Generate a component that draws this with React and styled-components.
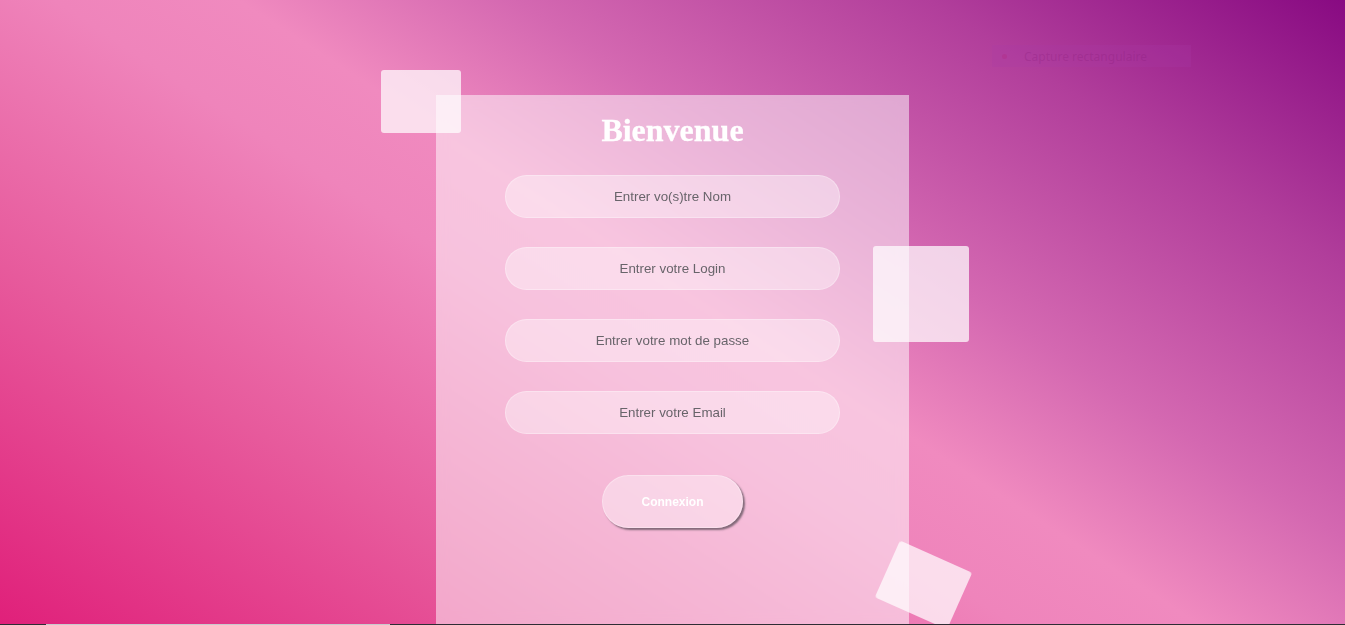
import styled, { createGlobalStyle } from "styled-components";

const GlobalStyle = createGlobalStyle`
    * { box-sizing: border-box; }
    html, body { margin: 0; padding: 0; height: 100%; overflow: hidden; }
    body { font-family: "Liberation Sans", Arial, sans-serif; }
`

const Page = styled.div`
    width: 100%;
    height: 625px;
    display: flex;
    flex-direction: column;
`
const Stage = styled.div`
    position: relative;
    flex: 1;
    overflow: hidden;
    display: flex;
    justify-content: center;
    padding-top: 95px;
    background: linear-gradient(33deg, #e0207a 0%, #e75a9c 24%, #ef84bb 44%, #f08abf 52%, #d468b1 64%, #b13e9b 82%, #880a82 100%);
`
const Card = styled.div`
    position: relative;
    z-index: 1;
    width: 473px;
    height: 100%;
    padding-top: 17px;
    display: flex;
    flex-direction: column;
    align-items: center;
    background-color: rgba(255, 255, 255, 0.5);
    backdrop-filter: blur(6px);
`
const Title = styled.h1`
    margin: 0 0 26px 0;
    font-family: "Liberation Serif", "Times New Roman", serif;
    font-size: 32px;
    font-weight: 700;
    color: #fff;
    -webkit-text-stroke: 0.3px #fff;
`
const Form = styled.form`
    display: flex;
    flex-direction: column;
    align-items: center;
    gap: 29px;
`
const Field = styled.input`
    width: 335px;
    height: 43px;
    border-radius: 22px;
    border: 1px solid rgba(255, 255, 255, 0.3);
    background-color: rgba(255, 255, 255, 0.38);
    outline: none;
    text-align: center;
    font-family: "Liberation Sans", Arial, sans-serif;
    font-size: 13.333px;
    color: #68646a;
    &::placeholder {
        color: #68646a;
    }
`
const Button = styled.button`
    margin-top: 12px;
    width: 141px;
    height: 53px;
    border-radius: 27px;
    border: 1px solid rgba(255, 255, 255, 0.3);
    background-color: rgba(255, 255, 255, 0.38);
    box-shadow: 2px 2px 2px rgba(80, 70, 80, 0.7);
    color: #fff;
    font-family: "Liberation Sans", Arial, sans-serif;
    font-size: 12px;
    font-weight: bold;
    cursor: pointer;
`
const Square = styled.div`
    position: absolute;
    z-index: 2;
    left: ${({ x }) => x}px;
    top: ${({ y }) => y}px;
    width: ${({ w }) => w}px;
    height: ${({ h }) => h}px;
    border-radius: 3px;
    background-color: rgba(255, 255, 255, 0.72);
    transform: rotate(${({ r }) => r || 0}deg);
`
const Capture = styled.div`
    position: absolute;
    left: 992px;
    top: 45px;
    width: 199px;
    height: 22px;
    display: flex;
    align-items: center;
    gap: 17px;
    padding-left: 10px;
    background: rgba(170, 60, 170, 0.22);
    font-family: "Noto Sans", "Liberation Sans", sans-serif;
    font-size: 12px;
    white-space: nowrap;
    color: rgba(140, 30, 125, 0.3);
    .dot {
        flex: none;
        width: 5px;
        height: 5px;
        border-radius: 50%;
        background-color: rgba(180, 40, 130, 0.35);
    }
`
const Strip = styled.div`
    height: 1px;
    display: flex;
    background-color: #2e2d34;
    .light {
        margin-left: 46px;
        width: 344px;
        background-color: #c9c9cc;
    }
`

const fields = [
    "Entrer vo(s)tre Nom",
    "Entrer votre Login",
    "Entrer votre mot de passe",
    "Entrer votre Email",
];

const App = () => {
    return (
        <Page>
            <GlobalStyle />
            <Stage>
                <Square x={381} y={70} w={80} h={63} />
                <Square x={873} y={246} w={96} h={96} />
                <Square x={884} y={554} w={79} h={62} r={24} />
                <Card>
                    <Title>Bienvenue</Title>
                    <Form onSubmit={(e) => e.preventDefault()}>
                        {fields.map((f) => (
                            <Field key={f} type="text" placeholder={f} />
                        ))}
                        <Button type="submit">Connexion</Button>
                    </Form>
                </Card>
                <Capture>
                    <span className="dot" />
                    Capture rectangulaire
                </Capture>
            </Stage>
            <Strip>
                <span className="light" />
            </Strip>
        </Page>
    )
};

export default App;
